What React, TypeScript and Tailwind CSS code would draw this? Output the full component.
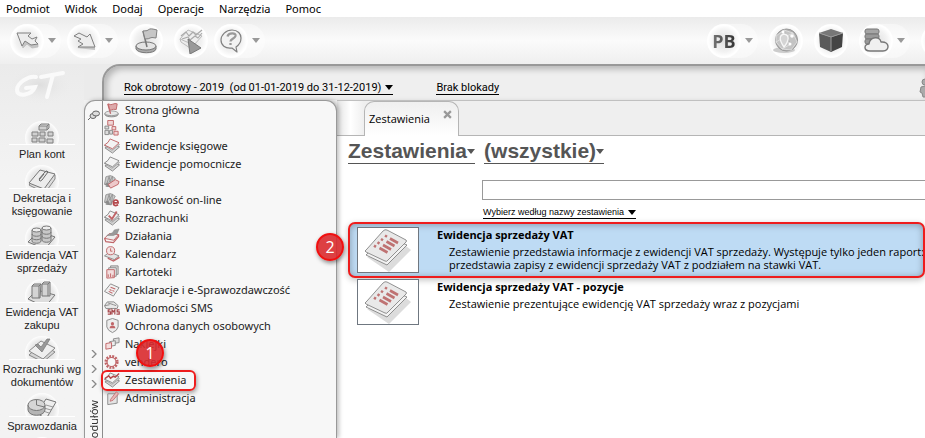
import { ReactNode, useState } from 'react';
import clsx from 'clsx';

const MENU = ['Podmiot', 'Widok', 'Dodaj', 'Operacje', 'Narzędzia', 'Pomoc'];

const G = '#8a8a8a';
const R = '#c06568';

const Sheets = ({ top = G, bottom = G, children }: { top?: string; bottom?: string; children?: ReactNode }) => (
  <>
    <path d="M1 10.500 9 16l7.500-6.500L9 6z" fill="#d5d5d5" stroke={bottom} />
    <path d="M.5 8 8.500 13 16.500 7 8 3z" fill="#e4e4e4" stroke={bottom} strokeWidth=".7" />
    <path d="M.5 7.500Q5 5 6.500 1l9.500 4q-3 3-7 6.500z" fill="#f3f3f3" stroke={top} />
    {children}
  </>
);

const Fan = () => (
  <>
    <path d="M.5 11 2 3l3-1 3 10zM2 13 6 1.500l3 1-1 11zM3 13 9 2.500l3 2-5 9z" fill="#c9c9c9" stroke={G} strokeWidth=".8" />
    <path d="M.5 11 4 9l3 5z" fill="#8a8a8a" />
  </>
);

const TREE: { label: string; icon: ReactNode }[] = [
  {
    label: 'Strona główna',
    icon: (
      <>
        <path d="M1 12v1.500c1 3 13 3 14 0V12" fill="#bbb" stroke={G} />
        <ellipse cx="8" cy="12" rx="7" ry="2.500" fill="#e6e6e6" stroke={G} strokeWidth=".8" />
        <path d="M7 12.500 4 2" stroke={R} strokeWidth="1.300" />
        <path d="M4.500 2q3 1.500 5 .3T14 2l-1 6q-3-.6-5 .3T6 8z" fill="#dda9aa" stroke={R} />
      </>
    ),
  },
  {
    label: 'Konta',
    icon: (
      <>
        <path d="M4 .5h6v5H4zM8.500 7h4v3.500h-4zM10.500 12h4.500v4h-4.500z" fill="#f0d5d5" stroke={R} />
        <path d="M1 6.500h4v3H1zM1 11h4v4.500H1zM6 11h3v4H6z" fill="#ddd" stroke={G} />
      </>
    ),
  },
  { label: 'Ewidencje księgowe', icon: <Sheets top={R} /> },
  { label: 'Ewidencje pomocnicze', icon: <Sheets /> },
  {
    label: 'Finanse',
    icon: (
      <>
        <Fan />
        <path d="m4.500 11 7.500-5 4 2-1 3-8 4z" fill="#edc9ca" stroke={R} />
      </>
    ),
  },
  {
    label: 'Bankowość on-line',
    icon: (
      <>
        <Fan />
        <path d="M10 11.500h5c0-4-5-4-5 0s3 3 5 2" fill="#f7f7f7" stroke="#b5484c" strokeWidth="1.800" />
      </>
    ),
  },
  { label: 'Rozrachunki', icon: <Sheets><path d="m5 6 3.500 3.500 5-8" fill="none" stroke={R} strokeWidth="2" /></Sheets> },
  {
    label: 'Działania',
    icon: (
      <>
        <path d="m.5 11 5-5 10 1-5 6z" fill="#eee" stroke={R} />
        <path d="m.5 11 1.500 3.500 8 1L15.500 9V7" fill="none" stroke={R} strokeWidth="1.300" />
        <path d="m3 8 6-3 2-3 5-1-2 5-4 2z" fill="#999" stroke={G} strokeWidth=".6" />
      </>
    ),
  },
  {
    label: 'Kalendarz',
    icon: (
      <>
        <path d="m.5 10.500 5.500-4 10 4-5 4z" fill="#e4e4e4" stroke={G} />
        <path d="m4 13 6 3 6.500-4" fill="none" stroke={R} strokeWidth="1.500" />
        <circle cx="7" cy="5" r="4.300" fill="#f3e4e4" stroke={R} />
        <path d="M7 2.500V5.500h2" fill="none" stroke={R} />
      </>
    ),
  },
  {
    label: 'Kartoteki',
    icon: (
      <>
        <path d="M7 2h8v9H7z" fill="#ddd" stroke={G} />
        <path d="M5 4h8v9H5z" fill="#eee" stroke={G} />
        <path d="M3 6h8v8.500l-8 .5z" fill="#f3dede" stroke={R} />
        <path d="M4.500 14v-3m2.500 3v-4m2.500 4v-2.500" stroke={R} />
      </>
    ),
  },
  {
    label: 'Deklaracje i e-Sprawozdawczość',
    icon: (
      <>
        <path d="M.5 10 7 2l9 4-6 9z" fill="#f1f1f1" stroke={G} />
        <path d="m7 5.500 5 2M6 8l2 1m1 0 2 1M5 10l4 2" stroke={R} strokeWidth="1.100" />
      </>
    ),
  },
  {
    label: 'Wiadomości SMS',
    icon: (
      <>
        <path d="m.5 6 3-4h7L15 6l-1 3H2z" fill="#e9e9e9" stroke={G} />
        <path d="m4 3 6 2 3 1M1 6l5-1" fill="none" stroke={G} />
        <path d="M7 10.500H4.500v2H7V15H4M8.500 15.500v-5l1.500 2 1.500-2v5m5-5H14v2h2.200V15h-3" fill="none" stroke="#a8484c" strokeWidth="1.300" />
      </>
    ),
  },
  {
    label: 'Ochrona danych osobowych',
    icon: (
      <>
        <path d="m9 .500 6 2v7q-1 4-6 6-5-2-6-6v-7z" fill="#ededed" stroke={G} />
        <circle cx="9" cy="6" r="1.700" fill={R} />
        <path d="M6 11q0-3 3-3t3 3z" fill={R} />
      </>
    ),
  },
  {
    label: 'Naklejki',
    icon: (
      <>
        <path d="m10 3 6-1v5l-6 1z" fill="#ddd" stroke={G} />
        <path d="m6 6 6-1v5l-6 1z" fill="#eee" stroke={G} />
        <path d="m2 8 6-1v6l-6 1z" fill="#f4dede" stroke={R} />
      </>
    ),
  },
  {
    label: 'vendero',
    icon: (
      <>
        <circle cx="8" cy="8.500" r="6" fill="none" stroke={R} strokeWidth="3" strokeDasharray="2 1.140" />
        <circle cx="8" cy="8.500" r="4.800" fill="none" stroke={R} strokeWidth="1.200" />
      </>
    ),
  },
  {
    label: 'Zestawienia',
    icon: <Sheets><path d="m1 7 4-3 2 2.500 3-2 2 1 4-4" fill="none" stroke="#b5484c" strokeWidth="1.600" /></Sheets>,
  },
  {
    label: 'Administracja',
    icon: (
      <>
        <path d="M4 4h10v10l-10 1.500z" fill="#e4e4e4" stroke={G} />
        <path d="m7 10 6-8 2.500 2-6 7-3 1z" fill="#e7b6b7" stroke={R} strokeWidth=".8" />
      </>
    ),
  },
];

const SHORTCUTS: { lines: string[]; icon: ReactNode }[] = [
  {
    lines: ['Plan kont'],
    icon: (
      <path
        d="M14 5l2-2h8v4l-2 2h-8zM14 5h8l2-2M22 5v4M7 11h6v4H7zM15 11h5v4h-5zM23 11h5v4h-5zM7 17h5v4H7zM14 17h6v4h-6zM22 18h6v4h-6z"
        fill="#d0d0d0"
        stroke="#808080"
      />
    ),
  },
  {
    lines: ['Dekretacja i', 'księgowanie'],
    icon: (
      <>
        <path d="M4 20 15 7l15 3v4L20 28z" fill="#ddd" stroke="#888" />
        <path d="M4 18 15 5l15 4-11 15z" fill="#ececec" stroke="#777" />
        <path d="m14 14 6-7q2-2 3 0l-6 8q-2 2-3 0l5-6" fill="none" stroke="#666" />
      </>
    ),
  },
  {
    lines: ['Ewidencja VAT', 'sprzedaży'],
    icon: (
      <>
        <path d="M3 20 14 9l16 6-10 12z" fill="#ddd" stroke="#777" />
        <path d="M7 8v11c0 3 9 3 9 0V8M17 6v12c0 3 9 3 9 0V6" fill="#c8c8c8" stroke="#777" />
        <path d="M7 12c0 3 9 3 9 0M7 15.500c0 3 9 3 9 0M17 10c0 3 9 3 9 0M17 14c0 3 9 3 9 0" fill="none" stroke="#777" />
        <ellipse cx="11.500" cy="8" rx="4.500" ry="2" fill="#eee" stroke="#777" />
        <ellipse cx="21.500" cy="6" rx="4.500" ry="2" fill="#eee" stroke="#777" />
      </>
    ),
  },
  {
    lines: ['Ewidencja VAT', 'zakupu'],
    icon: (
      <>
        <path d="M3 20 12 11l18 5-10 12z" fill="#ddd" stroke="#777" />
        <path d="m7 7 2-2h7l-1 14H7zM17 5l2-2h6v14h-8z" fill="#d4d4d4" stroke="#777" />
        <path d="M7 7h7v12M14 7l2-2M17 5h6v12M23 5l2-2" fill="none" stroke="#777" />
      </>
    ),
  },
  {
    lines: ['Rozrachunki wg', 'dokumentów'],
    icon: (
      <>
        <path d="m4 19 14 7 12-10-14-8z" fill="#d5d5d5" stroke="#888" />
        <path d="m4 15 14 8 12-11-14-7z" fill="#efefef" stroke="#888" />
        <path d="m10 9 3-1 3 3 6-8h3l-8 13z" fill="#999" stroke="#777" strokeWidth=".7" />
      </>
    ),
  },
  {
    lines: ['Sprawozdania'],
    icon: (
      <>
        <path d="m12 20 9-14 10 3-10 17z" fill="#eee" stroke="#777" />
        <path d="m21 12 7 2m-9 1 7 2m-8 1 6 2" stroke="#999" />
        <path d="M3 12v5c1 7 16 7 17 0v-5" fill="#b5b5b5" stroke="#777" />
        <ellipse cx="11.500" cy="12" rx="8.500" ry="5.500" fill="#d6d6d6" stroke="#777" />
        <path d="M11.500 12V6.500M11.500 12l8 2" stroke="#777" />
      </>
    ),
  },
];

const REPORTS = [
  {
    title: 'Ewidencja sprzedaży VAT',
    lines: [
      'Zestawienie przedstawia informacje z ewidencji VAT sprzedaży. Występuje tylko jeden raport:',
      'przedstawia zapisy z ewidencji sprzedaży VAT z podziałem na stawki VAT.',
    ],
  },
  {
    title: 'Ewidencja sprzedaży VAT - pozycje',
    lines: ['Zestawienie prezentujące ewidencję VAT sprzedaży wraz z pozycjami'],
  },
];

const Caret = ({ className }: { className?: string }) => (
  <svg viewBox="0 0 8 5" className={clsx('h-[5px] w-2 shrink-0', className)} fill="currentColor" aria-hidden="true">
    <path d="M0 0h8L4 5z" />
  </svg>
);

const ToolButton = ({ label, menu, children }: { label: string; menu?: boolean; children: ReactNode }) => (
  <button type="button" aria-label={label} className={clsx('flex h-[34px] shrink-0 items-center rounded-full', menu && 'w-[51px] bg-white/40')}>
    <span className="flex size-[34px] shrink-0 items-center justify-center rounded-full bg-[radial-gradient(circle,#e0e0e0_0%,#f2f2f2_45%,#ffffff_65%)]">
      {children}
    </span>
    {menu && <Caret className="ml-1 text-[#999]" />}
  </button>
);

const ToolIcon = ({ children }: { children: ReactNode }) => (
  <svg viewBox="0 0 26 26" className="size-[26px]" fill="none" strokeLinejoin="round" aria-hidden="true">
    {children}
  </svg>
);

const Toolbar = () => (
  <div className="flex h-[47px] shrink-0 items-center gap-[11px] overflow-hidden bg-linear-to-b from-[#ebebeb] via-[#fbfbfb] to-[#efefef] pl-[10px]">
    <div className="flex gap-[6px]">
      <ToolButton label="Wstecz" menu>
        <ToolIcon>
          <path d="m8 18 1 2 4-4 5 4 6-1v-3l-7 1-6-4z" fill="#c4c4c4" stroke="#bbb" strokeWidth=".7" />
          <path d="M3 5h14l-3 3 4 3 5-2-2 4 3 3-7 1-6-4-3 5z" fill="#ededed" stroke="#808080" />
        </ToolIcon>
      </ToolButton>
      <ToolButton label="Dalej" menu>
        <ToolIcon>
          <path d="m6 20 18 2v-3H8z" fill="#c4c4c4" />
          <path d="m3 8 5-3 8 4 3-3 5 13H7l5-3-5-3 3-2z" fill="#ededed" stroke="#808080" />
        </ToolIcon>
      </ToolButton>
    </div>
    <ToolButton label="Strona główna">
      <ToolIcon>
        <path d="M3 18v3c2 5 19 5 20 0v-3" fill="#aaa" stroke="#777" />
        <ellipse cx="13" cy="18" rx="10" ry="4" fill="#e4e4e4" stroke="#777" />
        <path d="M14 19 10 3" stroke="#777" strokeWidth="1.500" />
        <path d="M10 3q5 0 6-1.500T24 2l-1 8q-5-1-6 0t-5 1z" fill="#c6c6c6" stroke="#808080" />
      </ToolIcon>
    </ToolButton>
    <div className="flex gap-[6px]">
      <ToolButton label="Wykonaj">
        <ToolIcon>
          <path d="m2 11 8-9 14 6-8 9z" fill="#eee" stroke="#bbb" />
          <path d="m2 11 1 3 9 6" stroke="#bbb" />
          <path d="m3 8 5-4 3 4 4-4 3 3 6-5m-20 9 6-2 2 3 5-4 3 2 4-5" stroke="#aaa" strokeWidth="1.200" />
          <path d="m10 11 13 9-11 6z" fill="#999" stroke="#777" />
        </ToolIcon>
      </ToolButton>
      <ToolButton label="Pomoc" menu>
        <ToolIcon>
          <path d="M14 2c6 0 9 4 9 8s-2 7-5 9l1 5-5-4C7 21 3 17 3 12S8 2 14 2z" fill="#f2f2f2" stroke="#808080" strokeWidth="1.200" />
          <path d="M9.500 8.500c1-4 9-4 8-.5-1 3-5 2.500-5 5.500m0 1.500v2" stroke="#999" strokeWidth="2.300" />
        </ToolIcon>
      </ToolButton>
    </div>
    <div className="ml-auto flex gap-[11px]">
      <ToolButton label="Użytkownik" menu>
        <span className="bg-linear-to-r from-[#777] to-[#333] bg-clip-text font-['Open_Sans',sans-serif] text-[18px] leading-none font-bold text-transparent">PB</span>
      </ToolButton>
      <ToolButton label="Internet">
        <ToolIcon>
          <ellipse cx="11" cy="22" rx="11" ry="3" fill="#ccc" />
          <circle cx="13.500" cy="12" r="11" fill="#b0b0b0" stroke="#999" />
          <path d="m3 8 8-6 9 3 4 9-6 8-9-1-6-7zm8-6-1 8 8 6m2-11-10 5-7 4m6 7 9-5" fill="#c4c4c4" stroke="#e4e4e4" strokeWidth=".8" />
          <path d="M11 19c-5-7-5-12 0-13 6 1 5 7 0 13z" fill="#d4d4d4" stroke="#f6f6f6" strokeWidth="1.300" />
          <circle cx="19" cy="8" r="1.800" fill="#fff" />
          <circle cx="17" cy="16" r="1.500" fill="#fff" />
          <circle cx="10" cy="4" r="1.500" fill="#fff" />
        </ToolIcon>
      </ToolButton>
      <ToolButton label="Magazyn">
        <ToolIcon>
          <path d="m1 5 12 4v15L2 19z" fill="#5a5a5a" />
          <path d="m25 5-12 4v15l11-5z" fill="#444" />
          <path d="M1 5 13 1l12 4-12 4z" fill="#777" />
          <path d="m1 5 12 4 12-4M13 9v14" stroke="#999" />
        </ToolIcon>
      </ToolButton>
      <ToolButton label="Chmura" menu>
        <ToolIcon>
          <rect x="2" y="1" width="14" height="5" rx="2" fill="#a5a5a5" stroke="#777" />
          <rect x="2" y="6" width="14" height="5" rx="2" fill="#999" stroke="#777" />
          <rect x="2" y="11" width="14" height="5" rx="2" fill="#999" stroke="#777" />
          <path d="M7 23c-7 0-6-7-1-7 1-8 11-8 12-2 9-1 9 9 2 9z" fill="#f0f0f0" stroke="#777" strokeWidth="1.400" />
        </ToolIcon>
      </ToolButton>
      <div className="w-1 overflow-hidden">
        <ToolButton label="Więcej">
          <span />
        </ToolButton>
      </div>
    </div>
  </div>
);

const Sidebar = () => (
  <aside className="w-[84px] shrink-0 overflow-hidden bg-linear-to-b from-[#ebebeb] to-[#f3f3f3] to-30%">
    <svg viewBox="0 0 84 57" className="h-[57px] w-full" fill="none" stroke="#fafafa" strokeWidth="4" strokeLinecap="round" aria-label="GT">
      <defs>
        <radialGradient id="glow">
          <stop offset="0" stopColor="#dedede" />
          <stop offset="1" stopColor="#ededed" stopOpacity="0" />
        </radialGradient>
      </defs>
      <ellipse cx="40" cy="21" rx="34" ry="20" fill="url(#glow)" stroke="none" />
      <path d="M36 13c-7-2-19 6-19 13 0 8 15 5 18-3l-9 1M41 13l22-4M53 11l-6 22" />
    </svg>
    <nav className="flex flex-col gap-1 font-['Liberation_Sans',Arial,sans-serif] text-[11px] leading-[13px] text-[#222]">
      {SHORTCUTS.map(({ lines, icon }) => (
        <button key={lines.join(' ')} type="button" className="flex flex-col items-center">
          <span className="mb-[3px] flex h-6 w-[66px] justify-center overflow-hidden border-b border-white">
            <svg viewBox="0 0 34 34" className="size-[34px] shrink-0 rounded-full bg-[radial-gradient(circle,#d8d8d8_0%,#e9e9e9_50%,#fdfdfd_70%)]" aria-hidden="true">
              {icon}
            </svg>
          </span>
          {lines.map((line) => (
            <span key={line} className="whitespace-nowrap">{line}</span>
          ))}
        </button>
      ))}
      <span className="mx-auto size-[34px] rounded-full bg-white" />
    </nav>
  </aside>
);

const Badge = ({ children, className }: { children: ReactNode; className: string }) => (
  <span
    className={clsx(
      "absolute z-20 flex size-7 items-center justify-center rounded-full border-2 border-[#f01010] bg-[#d92a2e]/90 font-['Open_Sans',sans-serif] text-[16px] leading-none text-white shadow-[1px_2px_4px_rgba(0,0,0,0.45)]",
      className,
    )}
  >
    {children}
  </span>
);

const ModuleStrip = () => (
  <div className="flex w-[18px] shrink-0 flex-col items-center overflow-hidden border-r border-[#8c8c8c] pt-2">
    <svg viewBox="0 0 12 12" className="size-3 shrink-0" fill="#ddd" stroke="#666" aria-hidden="true">
      <path d="m0 11 4-4" />
      <ellipse cx="5" cy="7" rx="3" ry="2.500" />
      <ellipse cx="8" cy="4.500" rx="3.500" ry="2.500" />
    </svg>
    <div className="mt-[229px] flex flex-col gap-[7px]">
      {[0, 1, 2].map((n) => (
        <svg key={n} viewBox="0 0 6 8" className="h-2 w-[6px]" fill="none" stroke="#888" strokeWidth="1.300" aria-hidden="true">
          <path d="m1 0 4 4-4 4" />
        </svg>
      ))}
    </div>
    <span className="mt-3 shrink-0 rotate-180 font-['Noto_Sans',sans-serif] text-[11px] leading-[14px] whitespace-nowrap text-[#333] [writing-mode:vertical-rl]">
      modułów
    </span>
  </div>
);

const ModuleTree = () => {
  const [active, setActive] = useState('Zestawienia');

  return (
    <ul className="min-w-0 flex-1 font-['Noto_Sans',sans-serif] text-[11px] leading-[18px] text-[#222]">
      {TREE.map(({ label, icon }) => (
        <li key={label} className="relative">
          <button type="button" onClick={() => setActive(label)} className="flex h-[18px] w-full items-center gap-[5px] pl-px text-left whitespace-nowrap">
            <svg viewBox="0 0 17 17" className="size-4 shrink-0" aria-hidden="true">
              {icon}
            </svg>
            {label}
          </button>
          {active === label && (
            <>
              <span className="pointer-events-none absolute -top-px -left-0.5 h-[21px] w-[95px] rounded-[6px] border-2 border-[#ee1c1c] shadow-[1px_2px_4px_rgba(0,0,0,0.35)]" />
              <Badge className="-top-8 left-[33px]">1</Badge>
            </>
          )}
        </li>
      ))}
    </ul>
  );
};

const ReportThumb = () => (
  <svg viewBox="0 0 60 44" className="h-[46px] w-[62px] shrink-0 border border-[#6f7780] bg-white" aria-hidden="true">
    <path d="m9 29 22 15 22-22-5-4z" fill="#dcdcdc" />
    <path d="m8 27 21 10 20-20-21-9z" fill="#f2f2f2" stroke="#777" strokeWidth=".8" />
    <path d="M7 23q1-1 2-2L25 3q2-2 4-1l19 10q1 1 0 2L30 32q-1 2-3 1L8 24z" fill="#e9e9e9" stroke="#777" strokeWidth=".8" />
    <path d="m27 7.500 2 1.300m-6 2.200 2 1.300m-5.500 2 2 1.300m-5.500 2 2 1.300" stroke="#bf7373" strokeWidth="2.500" />
    <path d="m32 10.500 8 4.500m-11.500-1.500 8 4.500M25 17l8 4.500m-11.500-1.500 8 4.500" stroke="#bf7373" strokeWidth="2.600" />
  </svg>
);

const Reports = () => {
  const [selected, setSelected] = useState(0);

  return (
    <ul className="flex flex-col font-['Open_Sans',sans-serif] text-[11px] leading-[13px] text-black">
      {REPORTS.map(({ title, lines }, i) => (
        <li key={title} className="relative pl-[11px]">
          <button
            type="button"
            onClick={() => setSelected(i)}
            className={clsx(
              'flex w-full gap-[18px] overflow-hidden text-left whitespace-nowrap',
              i === selected
                ? 'rounded-[7px] border-2 border-[#ee1c1c] bg-[#bedbf4] py-[3px] pl-[7px] shadow-[inset_0_1px_7px_rgba(0,0,0,0.3),0_2px_6px_rgba(0,0,0,0.25)]'
                : 'py-px pl-[9px]',
            )}
          >
            <ReportThumb />
            <span className="flex flex-col">
              <span className="leading-[16px] font-bold">{title}</span>
              <span className="mt-0.5 flex flex-col pl-3">
                {lines.map((line) => (
                  <span key={line}>{line}</span>
                ))}
              </span>
            </span>
          </button>
          {i === selected && <Badge className="top-[11px] -left-[21px]">2</Badge>}
        </li>
      ))}
    </ul>
  );
};

const Content = () => (
  <main className="flex min-w-0 flex-1 flex-col border-t border-[#c0c0c0] bg-white">
    <div className="flex h-[35px] shrink-0 bg-[#efefef]">
      <div className="w-[27px] border-b border-[#b5b5b5] bg-linear-to-r from-[#e4e4e4] via-white to-[#efefef]" />
      <div className="flex w-[95px] rounded-t-[10px] border-x border-t border-[#b5b5b5] bg-linear-to-b from-[#efefef] to-white pt-2 pl-[4px]">
        <span className="pt-px font-['Open_Sans',sans-serif] text-[11px] leading-[16px] text-black">Zestawienia</span>
        <button type="button" aria-label="Zamknij" className="ml-auto mr-1.5 flex size-[9px]">
          <svg viewBox="0 0 8 8" className="size-[9px]" stroke="#999" strokeWidth="2" aria-hidden="true">
            <path d="m1 1 6 6m0-6L1 7" />
          </svg>
        </button>
      </div>
      <div className="flex-1 border-b border-[#b5b5b5]" />
    </div>
    <div className="flex gap-[9px] pt-[3px] pl-[11px] font-['Liberation_Sans',Arial,sans-serif] text-[21px] leading-[24px] font-bold text-[#555]">
      {['Zestawienia', '(wszystkie)'].map((label) => (
        <button key={label} type="button" className="flex items-center border-b border-[#555]">
          {label}
          <Caret />
        </button>
      ))}
    </div>
    <div className="mt-4 flex flex-col items-start pl-[145px]">
      <input aria-label="Wybierz według nazwy zestawienia" className="h-5 w-full border border-r-0 border-[#999] bg-white px-1 text-[11px] outline-none" />
      <button type="button" className="mt-[7px] mb-[3px] ml-px flex items-center gap-1 border-b border-black font-['Liberation_Sans',Arial,sans-serif] text-[9px] leading-[11px] text-black">
        Wybierz według nazwy zestawienia
        <Caret />
      </button>
    </div>
    <Reports />
  </main>
);

export default function App() {
  return (
    <div className="flex h-screen flex-col overflow-hidden bg-[#f1f1f1]">
      <nav className="flex h-[17px] shrink-0 items-center gap-[15px] bg-white pl-[6px] font-['Noto_Sans',sans-serif] text-[11px] leading-[17px] text-black">
        {MENU.map((item) => (
          <button key={item} type="button">{item}</button>
        ))}
      </nav>
      <Toolbar />
      <div className="flex min-h-0 flex-1">
        <Sidebar />
        <div className="flex min-w-0 flex-1 flex-col">
          <div className="bg-[#ebebeb] pl-[18px]">
            <header className="flex h-9 items-center gap-[43px] overflow-hidden rounded-tl-[18px] border-t-2 border-l-2 border-[#999] bg-[#efefef] pt-[10px] pl-[20px] font-['Roboto',sans-serif] text-[11px] leading-[13px] whitespace-pre text-black shadow-[inset_3px_3px_6px_rgba(0,0,0,0.25)]">
              <button type="button" className="flex items-center gap-1 border-b border-black">
                {'Rok obrotowy - 2019  (od 01-01-2019 do 31-12-2019)'}
                <Caret />
              </button>
              <button type="button" className="border-b border-black">Brak blokady</button>
              <svg viewBox="0 0 6 20" className="ml-auto h-5 w-[6px]" fill="#aaa" stroke="#888" aria-hidden="true">
                <circle cx="6" cy="4" r="3" />
                <path d="M6 8 2 9 1 14l2 1 1 4h3" />
              </svg>
            </header>
          </div>
          <div className="flex min-h-0 flex-1">
            <section className="z-10 flex w-[253px] shrink-0 overflow-hidden rounded-t-[11px] border-x border-t border-[#999] bg-[#f7f7f7] shadow-[2px_0_4px_rgba(0,0,0,0.25)]">
              <ModuleStrip />
              <ModuleTree />
            </section>
            <Content />
          </div>
        </div>
      </div>
    </div>
  );
}
